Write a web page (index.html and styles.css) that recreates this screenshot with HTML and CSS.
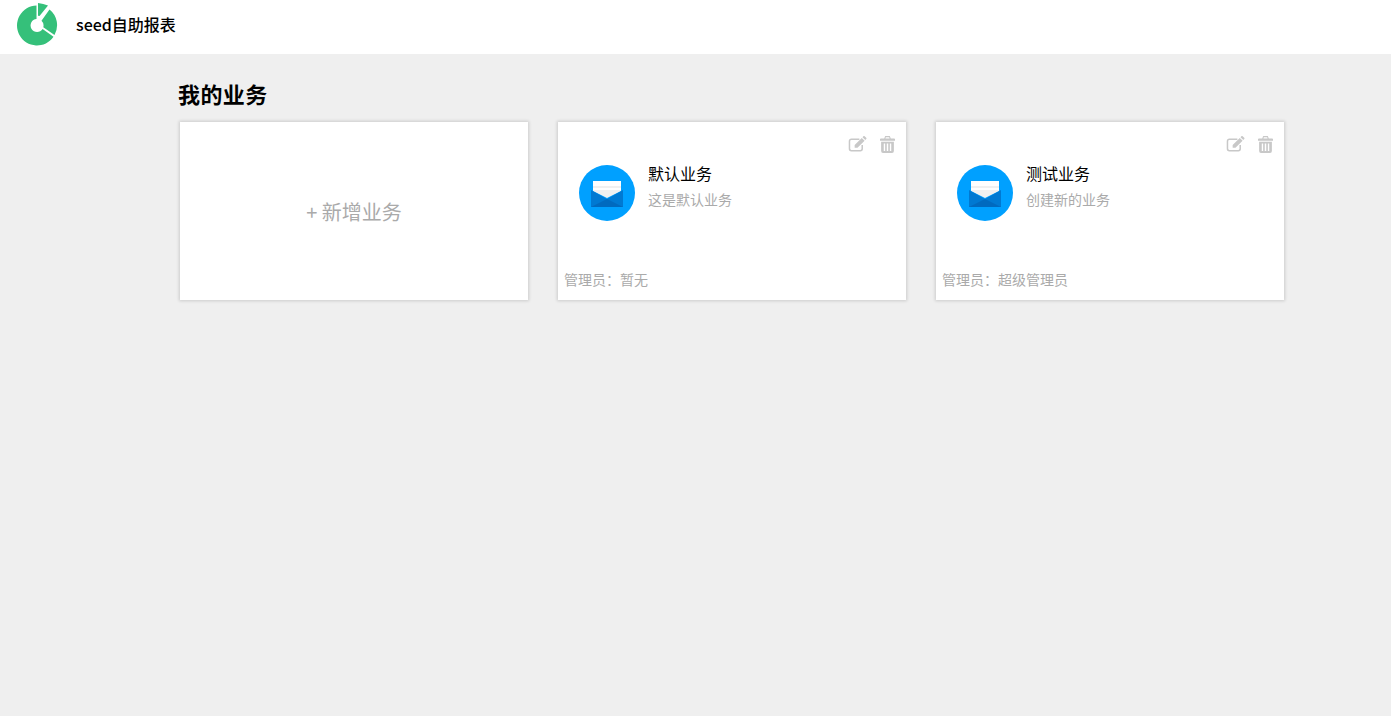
FILE: index.html
```html
<!DOCTYPE html>
<html lang="zh">
<head>
<meta charset="utf-8">
<title>seed自助报表</title>
<link rel="stylesheet" href="styles.css">
</head>
<body>
<header class="topbar">
  <svg class="logo" width="42" height="50" viewBox="0 0 42 50">
    <path fill="#35c07a" d="M20.500 3.500A20 20 0 1 0 37.500 34.800L26.600 26.900A6.500 6.500 0 1 1 20.500 17Z"/>
    <path fill="#35c07a" d="M33.500 7.500A20 20 0 0 1 38.500 33L27.300 25.200A6.500 6.500 0 0 0 25.500 18.800Z"/>
    <path fill="#35c07a" d="M22 1Q27.500 1.500 32 3.500L23.500 14L22 13.700Z"/>
  </svg>
  <span class="brand">seed自助报表</span>
</header>
<main class="content">
  <h1 class="heading">我的业务</h1>
  <div class="grid">
    <div class="card card-add">+ 新增业务</div>
    <div class="card">
      <div class="actions">
        <svg class="icon" width="19" height="17" viewBox="0 0 20 18"><path fill="none" stroke="currentColor" stroke-width="1.600" d="M12 3.500H3.500a2 2 0 0 0-2 2v8a2 2 0 0 0 2 2h9.500a2 2 0 0 0 2-2V9.500"/><path fill="currentColor" d="M7 9.500L14.500 2l3 3L10 12.500H7zM15.300 1.200l.9-.9a1 1 0 0 1 1.400 0l1.600 1.600a1 1 0 0 1 0 1.400l-.9.9z"/></svg>
        <svg class="icon" width="15" height="17" viewBox="0 0 16 18"><path fill="currentColor" d="M5.500 0h5l1 2.500H15a1 1 0 0 1 1 1V5H0V3.500a1 1 0 0 1 1-1h3.500zM6.200 1.200l-.4 1.300h4.400l-.4-1.300zM1.200 6h13.600v10a2 2 0 0 1-2 2H3.200a2 2 0 0 1-2-2zM4 8v8h1.500V8zm3.200 0v8h1.600V8zm3.300 0v8H12V8z"/></svg>
      </div>
      <div class="info">
        <svg class="avatar" width="56" height="56" viewBox="0 0 56 56"><circle cx="28" cy="28" r="28" fill="#00a0ff"/><path fill="#f0f0f0" d="M14 16h28v10L28 33 14 26z"/><path fill="#fff" d="M14 16h28v5H14zM14 23h28v2H14z"/><path fill="#0079d2" d="M12 25l16 9 16-9v17H12z"/><path fill="#006abf" d="M28 34l16 8H12z"/></svg>
        <div class="text">
          <div class="name">默认业务</div>
          <div class="desc">这是默认业务</div>
        </div>
      </div>
      <div class="admin">管理员：暂无</div>
    </div>
    <div class="card">
      <div class="actions">
        <svg class="icon" width="19" height="17" viewBox="0 0 20 18"><path fill="none" stroke="currentColor" stroke-width="1.600" d="M12 3.500H3.500a2 2 0 0 0-2 2v8a2 2 0 0 0 2 2h9.500a2 2 0 0 0 2-2V9.500"/><path fill="currentColor" d="M7 9.500L14.500 2l3 3L10 12.500H7zM15.300 1.200l.9-.9a1 1 0 0 1 1.400 0l1.600 1.600a1 1 0 0 1 0 1.400l-.9.9z"/></svg>
        <svg class="icon" width="15" height="17" viewBox="0 0 16 18"><path fill="currentColor" d="M5.500 0h5l1 2.500H15a1 1 0 0 1 1 1V5H0V3.500a1 1 0 0 1 1-1h3.500zM6.200 1.200l-.4 1.300h4.400l-.4-1.300zM1.200 6h13.600v10a2 2 0 0 1-2 2H3.200a2 2 0 0 1-2-2zM4 8v8h1.500V8zm3.200 0v8h1.600V8zm3.300 0v8H12V8z"/></svg>
      </div>
      <div class="info">
        <svg class="avatar" width="56" height="56" viewBox="0 0 56 56"><circle cx="28" cy="28" r="28" fill="#00a0ff"/><path fill="#f0f0f0" d="M14 16h28v10L28 33 14 26z"/><path fill="#fff" d="M14 16h28v5H14zM14 23h28v2H14z"/><path fill="#0079d2" d="M12 25l16 9 16-9v17H12z"/><path fill="#006abf" d="M28 34l16 8H12z"/></svg>
        <div class="text">
          <div class="name">测试业务</div>
          <div class="desc">创建新的业务</div>
        </div>
      </div>
      <div class="admin">管理员：超级管理员</div>
    </div>
  </div>
</main>
</body>
</html>
```
FILE: styles.css
```css
* { box-sizing: border-box; }
html, body { height: 100%; }
body {
  margin: 0;
  background: #efefef;
  font-family: "Noto Sans CJK SC", "Noto Sans", sans-serif;
  color: #000;
  overflow: hidden;
}
.topbar {
  height: 54px;
  background: #fff;
  display: flex;
  align-items: center;
  padding-left: 16px;
}
.logo { display: block; }
.brand {
  margin-left: 18px;
  font-size: 16px;
  font-weight: 500;
  line-height: 22px;
  margin-top: -6px;
}
.content { padding: 24px 0 0 180px; }
.heading {
  margin: 0 0 13px -2px;
  font-size: 22px;
  font-weight: 700;
  line-height: 31px;
  letter-spacing: 0.4px;
}
.grid {
  display: grid;
  grid-template-columns: repeat(3, 348px);
  gap: 30px;
}
.card {
  height: 178px;
  background: #fff;
  box-shadow: 0 0 3px 1px rgba(0, 0, 0, 0.15);
  display: flex;
  flex-direction: column;
}
.card-add {
  align-items: center;
  justify-content: center;
  font-size: 20px;
  color: #aaa;
}
.actions {
  display: flex;
  justify-content: flex-end;
  align-items: center;
  gap: 13px;
  height: 18px;
  margin-top: 13px;
  padding-right: 11px;
  color: #c8c8c8;
}
.icon { display: block; }
.info {
  display: flex;
  align-items: flex-start;
  margin-top: 12px;
  padding-left: 21px;
}
.text { margin: -2px 0 0 13px; }
.name { font-size: 16px; line-height: 20px; }
.desc { margin-top: 6px; font-size: 14px; line-height: 20px; color: #aaa; }
.admin {
  margin-top: auto;
  padding: 0 0 11px 6px;
  font-size: 14px;
  line-height: 20px;
  color: #aaa;
}
```
